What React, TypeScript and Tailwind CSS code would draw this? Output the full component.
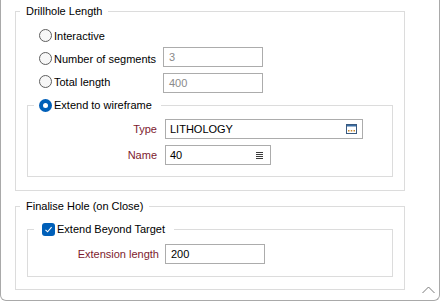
import { ReactNode } from "react";

function Radio({ checked }: { checked?: boolean }) {
  if (checked) {
    return (
      <span className="flex h-[13px] w-[13px] shrink-0 items-center justify-center rounded-full bg-[#005fb8]">
        <span className="h-[5px] w-[5px] rounded-full bg-white" />
      </span>
    );
  }
  return (
    <span className="h-[13px] w-[13px] shrink-0 rounded-full border border-[#5f5f5f] bg-[#f7f7f7]" />
  );
}

function Checkbox() {
  return (
    <span className="flex h-[13px] w-[13px] shrink-0 items-center justify-center rounded-[3px] bg-[#005fb8]">
      <svg width="9" height="9" viewBox="0 0 9 9">
        <path d="M1.5 4.8 L3.6 6.8 L7.6 2.2" fill="none" stroke="white" strokeWidth="1.1" />
      </svg>
    </span>
  );
}

function Box({
  width,
  muted,
  children,
  icon,
  className = "",
}: {
  width: string;
  muted?: boolean;
  children: ReactNode;
  icon?: ReactNode;
  className?: string;
}) {
  return (
    <div
      className={`flex h-[20px] shrink-0 items-center border border-[#acacac] bg-white pl-[5px] pr-[5px] ${width} ${
        muted ? "text-[#8a8a8a]" : "text-black"
      } ${className}`}
    >
      <span className="flex-1 leading-[16px]">{children}</span>
      {icon}
    </div>
  );
}

function BrowseIcon() {
  return (
    <svg width="11" height="10" viewBox="0 0 11 10">
      <rect x="0.5" y="0.5" width="10" height="9" fill="white" stroke="#3a5a80" />
      <rect x="1" y="1" width="9" height="1.5" fill="#3a6ea5" />
      <rect x="2" y="6" width="1.5" height="1.5" fill="#c8862a" />
      <rect x="4.75" y="6" width="1.5" height="1.5" fill="#c8862a" />
      <rect x="7.5" y="6" width="1.5" height="1.5" fill="#c8862a" />
    </svg>
  );
}

function ListIcon() {
  return (
    <svg width="7" height="7" viewBox="0 0 7 7" className="mr-[2px]">
      <rect x="0" y="0" width="7" height="1" fill="#3c3c3c" />
      <rect x="0" y="2" width="7" height="1" fill="#3c3c3c" />
      <rect x="0" y="4" width="7" height="1" fill="#3c3c3c" />
      <rect x="0" y="6" width="7" height="1" fill="#3c3c3c" />
    </svg>
  );
}

export default function App() {
  return (
    <div className="h-[302px] w-[441px] bg-white font-['Liberation_Sans',Arial,sans-serif] text-[11px] leading-[16px] text-black">
      <div className="relative h-[301px] w-[440px] rounded-b-[6px] border-x border-b border-[#a9a9a9] pl-[14px] pt-[3px]">

        {/* Drillhole Length */}
        <fieldset className="w-[390px] border border-[#dcdcdc]">
          <legend className="ml-[4px] px-[6px]">Drillhole Length</legend>
          <div className="pb-[13px] pt-[5px]">
            <div className="flex h-[23px] items-center pl-[23px]">
              <Radio />
              <span className="ml-[2px]">Interactive</span>
            </div>
            <div className="flex h-[23px] pl-[23px]">
              <div className="flex h-[23px] items-center">
                <Radio />
                <span className="ml-[2px] w-[109px] whitespace-nowrap">Number of segments</span>
              </div>
              <Box width="w-[100px]" muted>3</Box>
            </div>
            <div className="flex h-[23px] pl-[23px]">
              <div className="flex h-[23px] items-center">
                <Radio />
                <span className="ml-[2px] w-[109px] whitespace-nowrap">Total length</span>
              </div>
              <Box width="w-[100px]" muted className="mt-[3px]">400</Box>
            </div>

            {/* Extend to wireframe */}
            <fieldset className="ml-[11px] mt-[4px] w-[366px] border border-[#dcdcdc]">
              <legend className="ml-[6px] pl-[5px] pr-[9px]">
                <span className="flex h-[16px] items-center">
                  <Radio checked />
                  <span className="ml-[2px]">Extend to wireframe</span>
                </span>
              </legend>
              <div className="flex flex-col gap-[6px] pb-[11px] pt-[6px]">
                <div className="flex items-center">
                  <span className="w-[129px] text-right text-[#7d1a2e]">Type</span>
                  <Box width="w-[198px]" className="ml-[8px] !pl-[4px]" icon={<BrowseIcon />}>
                    LITHOLOGY
                  </Box>
                </div>
                <div className="flex items-center">
                  <span className="w-[129px] text-right text-[#7d1a2e]">Name</span>
                  <Box width="w-[106px]" className="ml-[8px] !pl-[4px]" icon={<ListIcon />}>
                    40
                  </Box>
                </div>
              </div>
            </fieldset>
          </div>
        </fieldset>

        {/* Finalise Hole */}
        <fieldset className="mt-[7px] w-[390px] border border-[#dcdcdc]">
          <legend className="ml-[4px] px-[6px]">Finalise Hole (on Close)</legend>
          <div className="pb-[12px] pt-[7px]">
            <fieldset className="ml-[11px] w-[366px] border border-[#dcdcdc]">
              <legend className="ml-[6px] pl-[8px] pr-[9px]">
                <span className="flex h-[16px] items-center">
                  <Checkbox />
                  <span className="ml-[2px]">Extend Beyond Target</span>
                </span>
              </legend>
              <div className="pb-[12px] pt-[7px]">
                <div className="flex items-center">
                  <span className="w-[131px] text-right text-[#7d1a2e]">Extension length</span>
                  <Box width="w-[100px]" className="ml-[6px]">200</Box>
                </div>
              </div>
            </fieldset>
          </div>
        </fieldset>

        {/* collapse chevron */}
        <svg
          width="13"
          height="8"
          viewBox="0 0 13 8"
          className="absolute bottom-[6px] right-[4px]"
        >
          <path d="M0.5 7 L6.5 1 L12.5 7" fill="none" stroke="#7a7a7a" strokeWidth="1" />
        </svg>
      </div>
    </div>
  );
}
